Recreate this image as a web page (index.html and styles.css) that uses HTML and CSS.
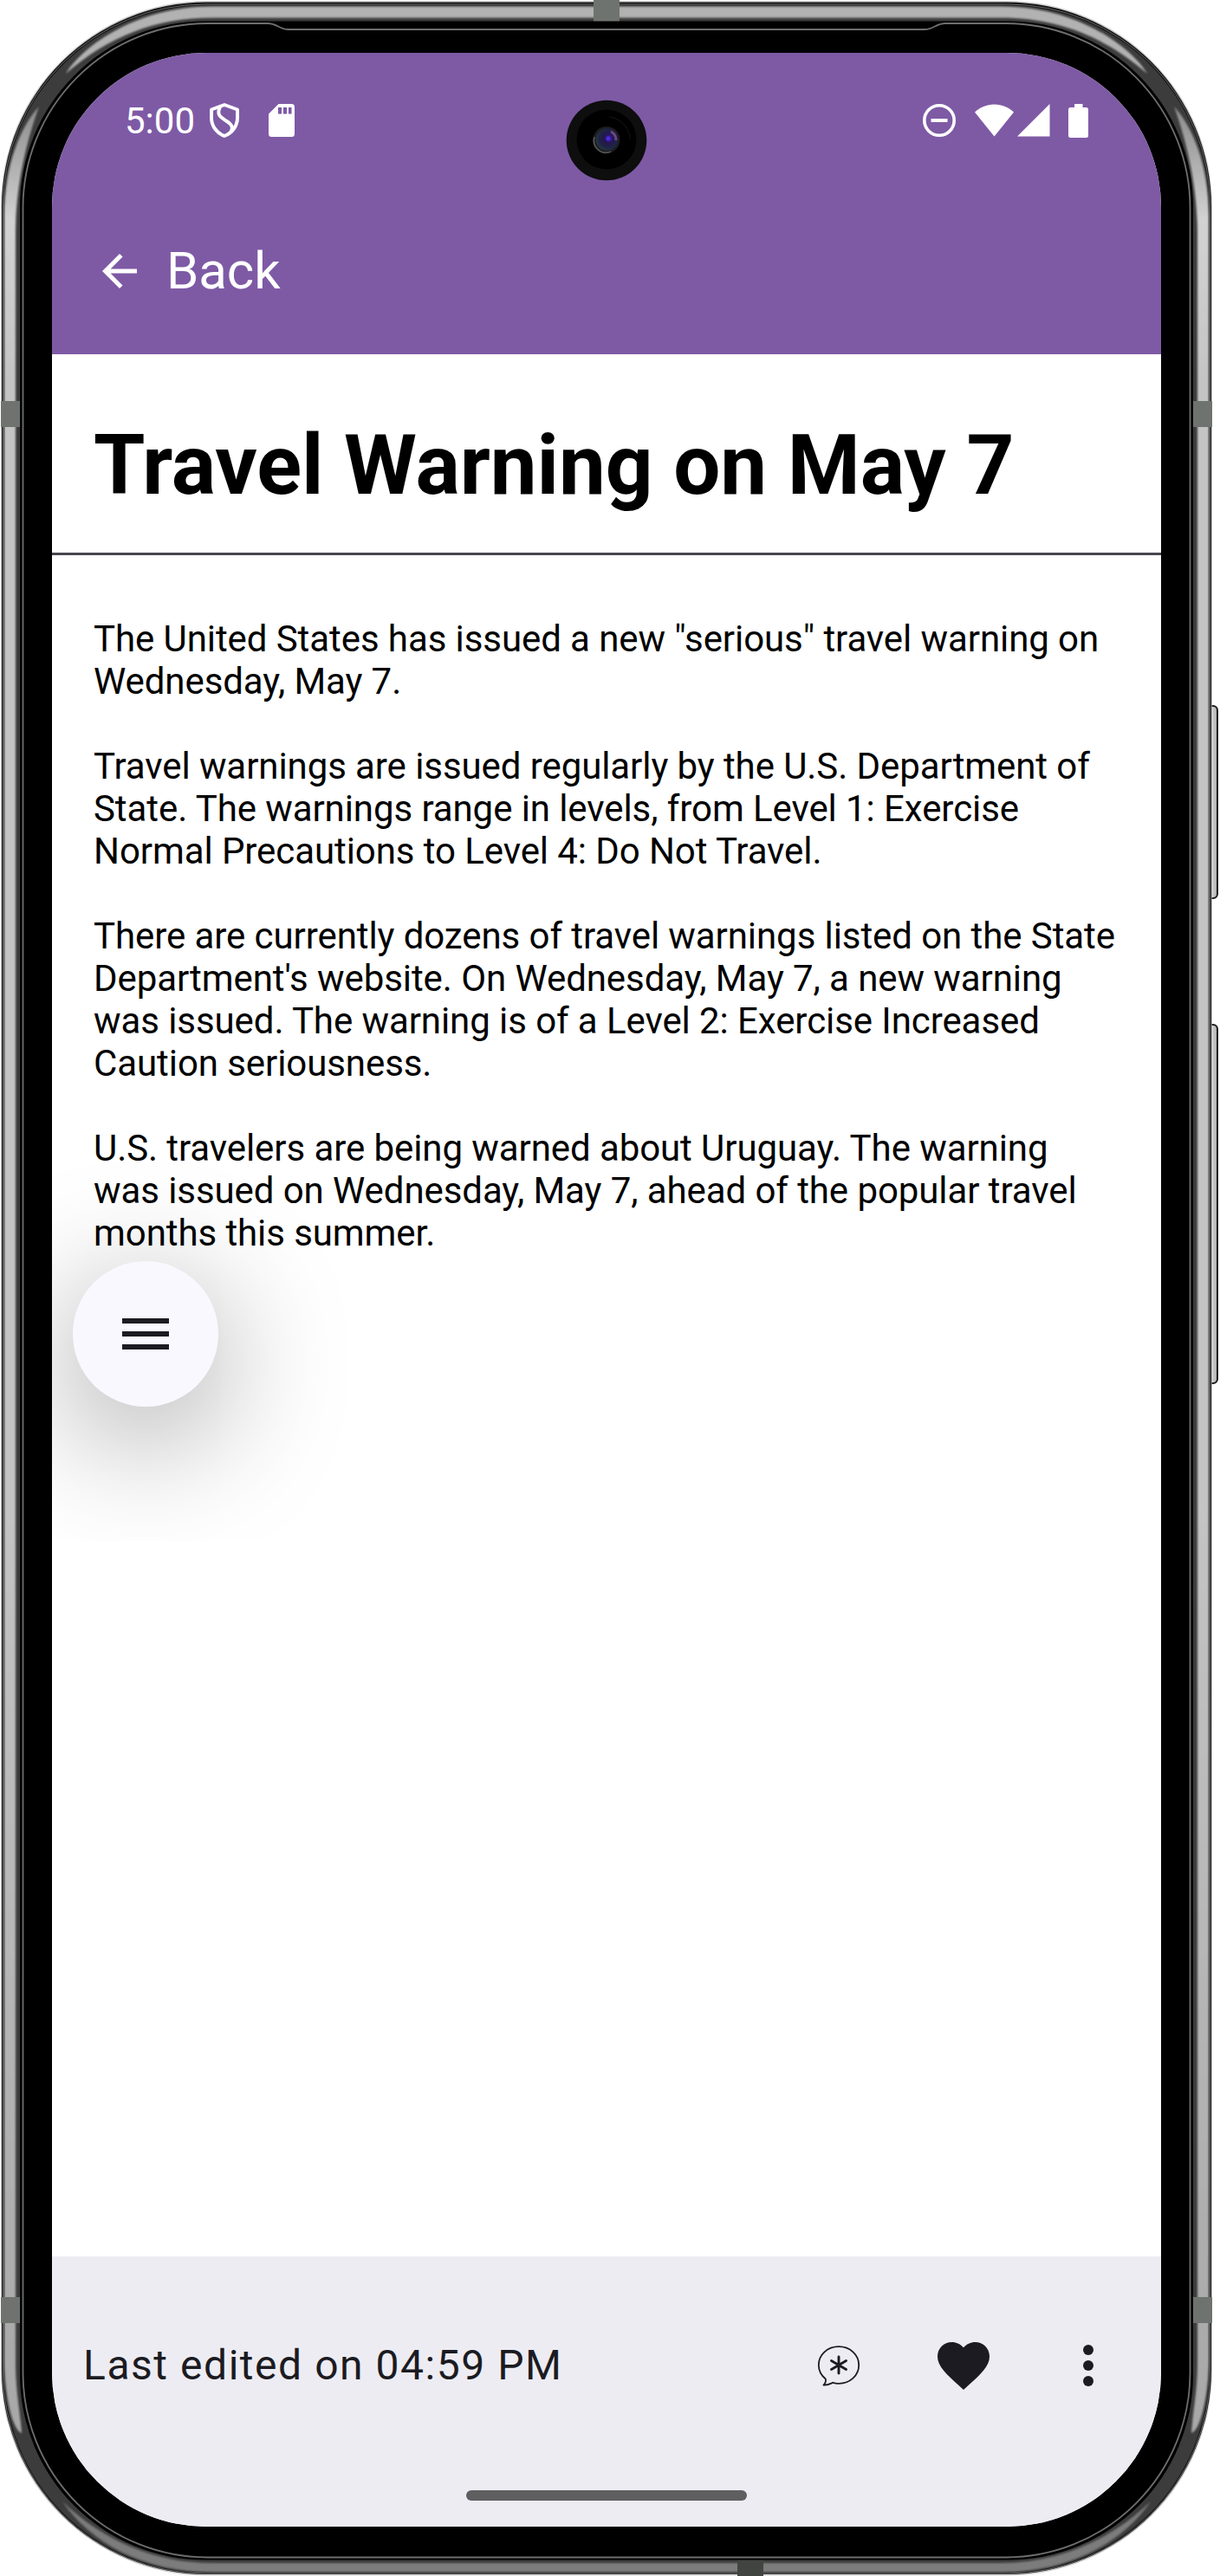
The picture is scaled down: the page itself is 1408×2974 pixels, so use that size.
FILE: index.html
```html
<!DOCTYPE html>
<html lang="en">
<head>
<meta charset="utf-8">
<title>Travel Warning on May 7</title>
<link rel="stylesheet" href="styles.css">
</head>
<body>
<div class="phone">
  <svg class="shell" viewBox="0 0 1408 2974" aria-hidden="true">
    <defs>
      <linearGradient id="side" gradientUnits="userSpaceOnUse" x1="0" y1="120" x2="0" y2="2810">
        <stop offset="0" stop-color="#8a8a8a"/><stop offset=".05" stop-color="#d2d2d2"/><stop offset=".12" stop-color="#c4c4c4"/><stop offset=".6" stop-color="#c4c4c4"/><stop offset="1" stop-color="#a8a8a8"/>
      </linearGradient>
      <linearGradient id="key" x1="0" y1="0" x2="1" y2="0">
        <stop offset="0" stop-color="#777"/><stop offset=".5" stop-color="#d6d6d6"/><stop offset="1" stop-color="#aaa"/>
      </linearGradient>
      <radialGradient id="lens" cx=".58" cy=".45" r=".6">
        <stop offset="0" stop-color="#3b1fc0"/><stop offset=".35" stop-color="#25164f"/><stop offset=".75" stop-color="#1d2742"/><stop offset="1" stop-color="#2b3a44"/>
      </radialGradient>
      <filter id="soft" x="-50%" y="-5%" width="200%" height="110%"><feGaussianBlur stdDeviation=".9"/></filter>
      <g id="edge">
        <path d="M45 123C24 146 5 190 5 250V2726C5 2762 14 2806 25 2809C23 2780 18 2762 18 2726V270C18 215 30 165 45 123Z" fill="url(#side)" filter="url(#soft)"/>
      </g>
    </defs>
    <!-- side keys -->
    <rect x="1392" y="815" width="13" height="222" rx="5" fill="url(#key)" stroke="#1c1c1c" stroke-width="2"/>
    <rect x="1392" y="1183" width="13" height="414" rx="5" fill="url(#key)" stroke="#1c1c1c" stroke-width="2"/>
    <!-- metal body -->
    <rect x="1" y="1" width="1398" height="2972.5" rx="237" fill="#bbb" opacity=".7"/>
    <rect x="2" y="2.5" width="1396" height="2969.5" rx="236" fill="#151515"/>
    <rect x="3.5" y="5" width="1393" height="2966" rx="233" fill="none" stroke="#666" stroke-width="1"/>
    <rect x="5" y="6.5" width="1390" height="2963" rx="232" fill="#3c3c3c"/>
    <use href="#edge"/>
    <use href="#edge" transform="translate(1400) scale(-1 1)"/>
    <path d="M76 85C92 58 152 7.500 245 7.500H1155C1248 7.500 1308 58 1324 85C1275 42 1220 20.500 1155 20.500H245C180 20.500 125 42 76 85Z" fill="#b2b2b2" filter="url(#soft)"/>
    <path d="M72 2888C104 2935 165 2969.500 245 2969.500H1155C1235 2969.500 1296 2935 1328 2888C1280 2934 1220 2959 1155 2959H245C180 2959 120 2934 72 2888Z" fill="#7c7c7c" filter="url(#soft)"/>
    <g fill="#6f736f">
      <rect x="1" y="463" width="24" height="30"/><rect x="1375" y="463" width="24" height="30"/>
      <rect x="1" y="2652" width="24" height="30"/><rect x="1375" y="2652" width="24" height="30"/>
      <rect x="685" y="0" width="30" height="25"/>
    </g>
    <rect x="851" y="2953" width="30" height="21" fill="#424442"/>
    <!-- bezel glass -->
    <rect x="23" y="24.500" width="1354" height="2931" rx="214" fill="#000"/>
    <path d="M26.500 240A213 213 0 0 1 239 27H309C320 27 322 34 333 34H1067C1078 34 1080 27 1091 27H1161A213 213 0 0 1 1373.500 240V2740A213 213 0 0 1 1161 2952.500H239A213 213 0 0 1 26.500 2740Z" fill="none" stroke="#6e6e6e" stroke-width="1.800"/>
  </svg>

  <main class="screen">
    <header class="header">
      <div class="status">
        <span class="time">5:00</span>
        <svg class="shield" viewBox="0 0 34 40"><g fill="none" stroke="#fff" stroke-width="3.900" stroke-linejoin="round"><path d="M17 2L32 7.500V17C32 26.500 26 34.500 17 38C8 34.500 2 26.500 2 17V7.500Z"/><path d="M12 4.500C7 14 14 17 19 20.500C26 25 27.500 28 24 34"/></g></svg>
        <svg class="sd" viewBox="0 0 30 38"><path fill="#fff" fill-rule="evenodd" d="M11.500 0H26.500Q30 0 30 3.500V34.500Q30 38 26.500 38H3.500Q0 38 0 34.500V11.500ZM11 4V11.500H15V4ZM17 4V11.500H21V4ZM23 4V11.500H26.500V4Z"/></svg>
        <svg class="dnd" viewBox="0 0 38 38"><circle cx="19" cy="19" r="17.200" fill="none" stroke="#fff" stroke-width="3.600"/><path d="M9.500 19H28.500" stroke="#fff" stroke-width="4"/></svg>
        <svg class="wifi" viewBox="0 0 45 38"><path fill="#fff" d="M22.500 37.500L0 9.500C6 4 13.500 .5 22.500 .5S39 4 45 9.500Z"/></svg>
        <svg class="signal" viewBox="0 0 38 38"><path fill="#fff" d="M0 37.500L37.500 0V37.500Z"/></svg>
        <svg class="battery" viewBox="0 0 23 39"><path fill="#fff" d="M7 0H16.500V4H20.500Q23 4 23 6.500V36.500Q23 39 20.500 39H2.500Q0 39 0 36.500V6.500Q0 4 2.500 4H7Z"/></svg>
      </div>
      <nav class="appbar">
        <svg class="arrow" viewBox="0 0 24 24"><path fill="#fff" d="M20 11H7.830l5.590-5.590L12 4l-8 8 8 8 1.410-1.410L7.830 13H20v-2z"/></svg>
        <span>Back</span>
      </nav>
    </header>

    <h1 class="title">Travel Warning on May 7</h1>

    <article class="note">
      <p>The United States has issued a new "serious" travel warning on Wednesday, May 7.</p>
      <p>Travel warnings are issued regularly by the U.S. Department of State. The warnings range in levels, from Level 1: Exercise Normal Precautions to Level 4: Do Not Travel.</p>
      <p>There are currently dozens of travel warnings listed on the State Department's website. On Wednesday, May 7, a new warning was issued. The warning is of a Level 2: Exercise Increased Caution seriousness.</p>
      <p>U.S. travelers are being warned about Uruguay. The warning was issued on Wednesday, May 7, ahead of the popular travel months this summer.</p>
    </article>

    <button class="fab" aria-label="Menu">
      <svg class="icon" viewBox="0 0 24 24"><path d="M3 18h18v-2H3v2zm0-5h18v-2H3v2zm0-7v2h18V6H3z"/></svg>
    </button>

    <footer class="bottom">
      <div class="actions">
        <span class="edited">Last edited on 04:59 PM</span>
        <span class="action"><svg class="icon" viewBox="0 0 72 72"><g fill="none" stroke="#1b1b21" stroke-linecap="round" stroke-linejoin="round"><path stroke-width="1.800" d="M36 14.200C49 14.200 59.200 23.500 59.200 35.500S49 56.800 36 56.800C33 56.800 31 56.400 29.500 55.700C26.500 57 22.500 59 18.500 58.500C20.500 56.500 21.500 54 20.800 51.500C16 47.500 12.800 42 12.800 35.500C12.800 23.500 23 14.200 36 14.200Z"/><path stroke-width="2.900" d="M36 26V45M27.500 30.500L44.500 40.500M44.500 30.500L27.500 40.500"/></g></svg></span>
        <span class="action"><svg class="icon" viewBox="0 0 24 24"><path d="M12 21.350l-1.450-1.320C5.400 15.360 2 12.280 2 8.500 2 5.420 4.420 3 7.500 3c1.740 0 3.410.810 4.500 2.090C13.090 3.810 14.760 3 16.500 3 19.580 3 22 5.420 22 8.500c0 3.780-3.400 6.860-8.550 11.540L12 21.350z"/></svg></span>
        <span class="action"><svg class="icon" viewBox="0 0 24 24"><circle cx="12" cy="6" r="2"/><circle cx="12" cy="12" r="2"/><circle cx="12" cy="18" r="2"/></svg></span>
      </div>
      <div class="pill"></div>
    </footer>
  </main>

  <svg class="camera" viewBox="0 0 94 94" aria-hidden="true">
    <circle cx="47" cy="47" r="46.300" fill="#0e0e0e"/>
    <circle cx="47" cy="46" r="34.500" fill="#000"/>
    <path d="M50 20A27 27 0 0 1 74 46" fill="none" stroke="#0d0d0d" stroke-width="1.500"/>
    <circle cx="47" cy="46.500" r="15.500" fill="#1c1c1e"/>
    <path d="M33 43A14 14 0 0 0 52 60" fill="none" stroke="#555" stroke-width="1.800"/>
    <circle cx="47.500" cy="46" r="12.800" fill="url(#lens)"/>
    <path d="M52 37A11 11 0 0 1 58 47" fill="none" stroke="#8a5a9c" stroke-width="3" opacity=".7"/>
    <circle cx="49" cy="45" r="2.500" fill="#4a2be0"/>
  </svg>
</div>
</body>
</html>
```
FILE: styles.css
```css
* { box-sizing: border-box; }

body {
  margin: 0;
  background: #fff;
  font-family: Roboto, "Liberation Sans", sans-serif;
}

.phone {
  position: relative;
  width: 1408px;
  height: 2974px;
  padding: 61px 68px 57px 60px;
  overflow: hidden;
}

.shell {
  position: absolute;
  inset: 0;
  width: 1408px;
  height: 2974px;
}

.screen {
  position: relative;
  display: flex;
  flex-direction: column;
  width: 1280px;
  height: 2856px;
  background: #fff;
  border-radius: 178px;
  overflow: hidden;
}

.camera {
  position: absolute;
  left: 653px;
  top: 115px;
  width: 94px;
  height: 94px;
}

svg { display: block; flex: none; }

.header {
  background: #7e5aa5;
  color: #fff;
}

.status {
  display: flex;
  align-items: center;
  height: 156px;
  padding: 0 84px;
}

.time {
  font-size: 42px;
  line-height: 49px;
}

.shield { width: 34px; height: 40px; margin-left: 17px; }
.sd { width: 30px; height: 38px; margin-left: 34px; }
.dnd { width: 38px; height: 38px; margin-left: auto; }
.wifi { width: 45px; height: 38px; margin-left: 22px; }
.signal { width: 38px; height: 38px; margin-left: 4px; }
.battery { width: 23px; height: 39px; margin-left: 21px; }

.appbar {
  display: flex;
  align-items: center;
  gap: 24px;
  height: 192px;
  padding-left: 48px;
  font-size: 60px;
  letter-spacing: -.1px;
  line-height: 70px;
}

.arrow { width: 60px; height: 60px; }

.title {
  margin: 0;
  padding: 72px 48px 45px;
  border-bottom: 3px solid #46464f;
  color: #000;
  font-size: 96px;
  font-weight: 700;
  letter-spacing: -.08px;
  line-height: 112px;
}

.note {
  padding: 72px 46px 0 48px;
  color: #000;
  font-size: 42px;
  letter-spacing: -.08px;
  line-height: 49px;
}

.note p { margin: 0 0 49px; }
.note p:last-child { margin-bottom: 0; }

.fab {
  display: flex;
  align-items: center;
  justify-content: center;
  width: 168px;
  height: 168px;
  margin: 8px 0 0 24px;
  padding: 0;
  border: 0;
  border-radius: 50%;
  background: #f9f8ff;
  box-shadow: 0 34px 150px rgba(0, 0, 0, .39);
}

.icon {
  width: 72px;
  height: 72px;
  fill: #1b1b21;
}

.bottom {
  display: flex;
  flex-direction: column;
  align-items: center;
  height: 312px;
  margin-top: auto;
  background: #edecf3;
}

.actions {
  display: flex;
  align-items: center;
  width: 100%;
  height: 252px;
  padding: 0 12px 0 36px;
}

.edited {
  flex: 1;
  color: #1b1b21;
  font-size: 48px;
  letter-spacing: 1.54px;
  line-height: 72px;
}

.action {
  display: flex;
  justify-content: center;
  width: 144px;
}

.pill {
  width: 324px;
  height: 12px;
  margin-top: 18px;
  border-radius: 6px;
  background: #5f5f61;
}
```
